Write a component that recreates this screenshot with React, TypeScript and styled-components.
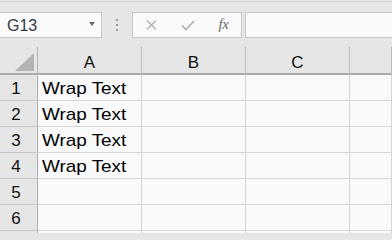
import React from "react";
import styled, { createGlobalStyle } from "styled-components";

const GlobalStyle = createGlobalStyle`
  html, body {
    margin: 0;
    padding: 0;
    background: #e6e6e6;
  }
  * {
    box-sizing: border-box;
  }
`;

const Sheet = styled.div`
  width: 392px;
  height: 233px;
  overflow: hidden;
  background: #e6e6e6;
  font-family: "Liberation Sans", Arial, sans-serif;
`;

const Toolbar = styled.div`
  display: flex;
  align-items: flex-start;
  height: 46px;
  margin-top: 1px;
  padding-top: 10px;
  border-top: 1px solid #d2d2d2;
`;

const NameBox = styled.div`
  position: relative;
  width: 102px;
  height: 26px;
  padding: 1px 0 0 7px;
  background: #fafafa;
  border: 1px solid #c6c6c6;
  border-left: none;
  color: #2f3a45;
  font-size: 16px;
  line-height: 24px;
`;

const DropArrow = styled.span`
  position: absolute;
  left: 89px;
  top: 9px;
  width: 0;
  height: 0;
  border-left: 3.5px solid transparent;
  border-right: 3.5px solid transparent;
  border-top: 4px solid #6a6a6a;
`;

const Grip = styled.div`
  width: 30px;
  height: 26px;
  display: flex;
  flex-direction: column;
  align-items: center;
  justify-content: center;
  gap: 3px;

  span {
    width: 2px;
    height: 2px;
    background: #9a9a9a;
  }
`;

const FuncBox = styled.div`
  width: 110px;
  height: 26px;
  display: flex;
  align-items: center;
  background: #fafafa;
  border: 1px solid #c6c6c6;
`;

const FuncButton = styled.span<{ $w: number }>`
  width: ${(p) => p.$w}px;
  display: flex;
  justify-content: center;
  align-items: center;
`;

const FxLabel = styled.span`
  font-family: "Liberation Serif", "Times New Roman", serif;
  font-style: italic;
  font-size: 15px;
  color: #6b6b6b;
  letter-spacing: -0.5px;
  margin-top: -1px;
`;

const FormulaBar = styled.div`
  flex: 1;
  height: 26px;
  margin-left: 3px;
  background: #fafafa;
  border: 1px solid #c6c6c6;
  border-right: none;
`;

const Grid = styled.div`
  display: grid;
  grid-template-columns: 38px 104px 104px 104px 1fr;
  grid-auto-rows: 26px;
  grid-template-rows: 28px;
`;

const Corner = styled.div`
  background: #e6e6e6;
  border-right: 1px solid #b3b3b3;
  border-bottom: 2px solid #ababab;
`;

const ColHeader = styled.div`
  background: #e6e6e6;
  border-right: 1px solid #bdbdbd;
  border-bottom: 2px solid #ababab;
  text-align: center;
  padding-top: 6px;
  font-size: 17px;
  line-height: 20px;
  color: #111;
`;

const RowHeader = styled.div`
  background: #e6e6e6;
  border-right: 1px solid #ababab;
  border-bottom: 1px solid #c9c9c9;
  text-align: center;
  padding: 3px 5px 0 0;
  font-size: 17px;
  line-height: 22px;
  color: #111;
`;

const Cell = styled.div`
  background: #f9f9f9;
  border-right: 1px solid #d6d6d6;
  border-bottom: 1px solid #d6d6d6;
  padding: 3px 0 0 4px;
  font-size: 17px;
  line-height: 22px;
  color: #000;
  white-space: nowrap;
  overflow: hidden;
`;

// the grid in the capture is drawn a little wider than tall
const CellText = styled.span`
  display: inline-block;
  transform: scaleX(1.11);
  transform-origin: left center;
`;

const columns = ["A", "B", "C", ""];
// the last row is only a sliver at the bottom edge, so it carries no label
const rows = ["1", "2", "3", "4", "5", "6", ""];

export default function App() {
  return (
    <Sheet>
      <GlobalStyle />
      <Toolbar>
        <NameBox>
          G13
          <DropArrow />
        </NameBox>
        <Grip>
          <span />
          <span />
          <span />
        </Grip>
        <FuncBox>
          <FuncButton $w={37}>
            <svg width="11" height="10" viewBox="0 0 11 10">
              <path d="M1 0.5 L10 9.5 M10 0.5 L1 9.5" stroke="#b0b0b0" strokeWidth="1.4" />
            </svg>
          </FuncButton>
          <FuncButton $w={36}>
            <svg width="14" height="11" viewBox="0 0 14 11">
              <path d="M1 5.5 L5 9.5 L13 1" stroke="#b0b0b0" strokeWidth="1.6" fill="none" />
            </svg>
          </FuncButton>
          <FuncButton $w={35}>
            <FxLabel>fx</FxLabel>
          </FuncButton>
        </FuncBox>
        <FormulaBar />
      </Toolbar>
      <Grid>
        <Corner>
          <svg width="37" height="26" viewBox="0 0 37 26">
            <polygon points="34,6 34,24 15,24" fill="#b4b4b4" />
          </svg>
        </Corner>
        {columns.map((c, i) => (
          <ColHeader key={i}>{c}</ColHeader>
        ))}
        {rows.map((r, ri) => (
          <React.Fragment key={ri}>
            <RowHeader>{r}</RowHeader>
            {columns.map((_, i) => (
              <Cell key={i}>
                {i === 0 && ri < 4 ? <CellText>Wrap Text</CellText> : null}
              </Cell>
            ))}
          </React.Fragment>
        ))}
      </Grid>
    </Sheet>
  );
}
